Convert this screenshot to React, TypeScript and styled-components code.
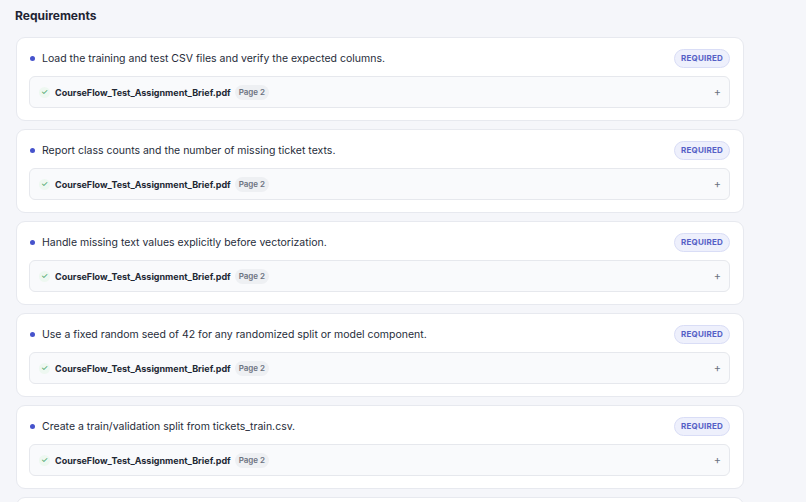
import React from "react";
import styled, { createGlobalStyle } from "styled-components";

const Global = createGlobalStyle`
  html, body {
    margin: 0;
    padding: 0;
    background: #f5f6fa;
  }
  body {
    font-family: Inter, "Noto Sans", sans-serif;
    color: #1f2937;
    -webkit-font-smoothing: antialiased;
  }
`;

const Page = styled.div`
  padding: 8px 62px 0 16px;
  height: 502px;
  overflow: hidden;
  box-sizing: border-box;
`;

const Title = styled.h2`
  margin: 0 0 13px -1px;
  font-size: 12px;
  font-weight: 700;
  line-height: 16px;
  color: #1e2433;
`;

const List = styled.div`
  display: flex;
  flex-direction: column;
  gap: 8px;
`;

const Card = styled.div`
  background: #ffffff;
  border: 1px solid #e7e9ef;
  border-radius: 9px;
  padding: 11px 13px 12px 12px;
  display: flex;
  flex-direction: column;
  gap: 8px;
`;

const Head = styled.div`
  display: flex;
  align-items: center;
  justify-content: space-between;
  height: 19px;
`;

const Statement = styled.div`
  display: flex;
  align-items: center;
  gap: 7px;
  padding-left: 1px;
  font-size: 10.5px;
  color: #262c3a;
`;

const Dot = styled.span`
  width: 5px;
  height: 5px;
  border-radius: 50%;
  background: #4653cc;
  flex: none;
`;

const Badge = styled.span`
  font-size: 8px;
  font-weight: 700;
  letter-spacing: 0.2px;
  color: #5560c6;
  background: #eef0fc;
  border: 1px solid #d9ddf6;
  border-radius: 10px;
  padding: 4px 6px;
  line-height: 9px;
`;

const Source = styled.div`
  display: flex;
  align-items: center;
  height: 30px;
  padding: 0 8px 0 9px;
  background: #f9fafc;
  border: 1px solid #e6e8ed;
  border-radius: 6px;
`;

const Check = styled.span`
  width: 11px;
  height: 11px;
  border-radius: 50%;
  background: #eef8f1;
  color: #3a9e62;
  font-size: 8px;
  display: flex;
  align-items: center;
  justify-content: center;
  margin-right: 5px;
`;

const FileName = styled.span`
  font-size: 9px;
  font-weight: 700;
  color: #222834;
`;

const PageTag = styled.span`
  margin-left: 4px;
  font-size: 8px;
  font-weight: 600;
  color: #6b7280;
  background: #eef0f3;
  border-radius: 8px;
  padding: 3px 4px;
  line-height: 9px;
`;

const Plus = styled.span`
  margin-left: auto;
  font-size: 11px;
  color: #6b7280;
`;

const items = [
  "Load the training and test CSV files and verify the expected columns.",
  "Report class counts and the number of missing ticket texts.",
  "Handle missing text values explicitly before vectorization.",
  "Use a fixed random seed of 42 for any randomized split or model component.",
  "Create a train/validation split from tickets_train.csv.",
  "Train a baseline text classifier and report validation metrics.",
];

export default function App() {
  return (
    <>
      <Global />
      <Page>
        <Title>Requirements</Title>
        <List>
          {items.map((text) => (
            <Card key={text}>
              <Head>
                <Statement>
                  <Dot />
                  {text}
                </Statement>
                <Badge>REQUIRED</Badge>
              </Head>
              <Source>
                <Check>✓</Check>
                <FileName>CourseFlow_Test_Assignment_Brief.pdf</FileName>
                <PageTag>Page 2</PageTag>
                <Plus>+</Plus>
              </Source>
            </Card>
          ))}
        </List>
      </Page>
    </>
  );
}
